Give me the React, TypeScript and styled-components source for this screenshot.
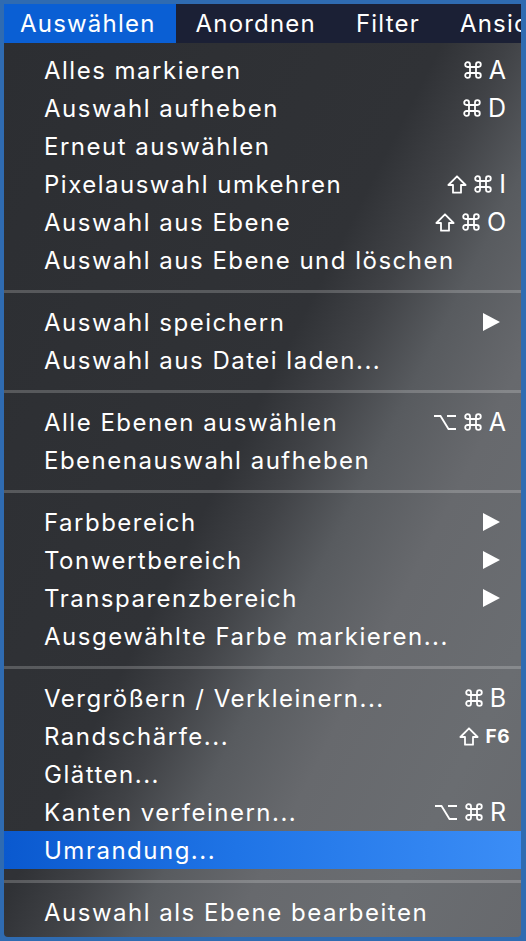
import React from 'react';
import styled, { createGlobalStyle } from 'styled-components';

const GlobalStyle = createGlobalStyle`
  html, body {
    margin: 0;
    padding: 0;
    background: #2f6bb1;
  }
  body {
    font-family: Inter, "Liberation Sans", sans-serif;
    -webkit-font-smoothing: antialiased;
  }
`;

const Frame = styled.div`
  width: 526px;
  height: 941px;
  box-sizing: border-box;
  padding: 4px 5px 4px 4px;
  background: #2f6bb1;
  display: flex;
  flex-direction: column;
  overflow: hidden;
`;

const MenuBar = styled.div`
  height: 39px;
  flex: none;
  display: flex;
  align-items: stretch;
  background: #1b2035;
  white-space: nowrap;
  overflow: hidden;
`;

const BarItem = styled.div<{ $active?: boolean; $first?: boolean }>`
  display: flex;
  align-items: center;
  padding: 0 20px 0 ${({ $first }) => ($first ? '16px' : '20px')};
  font-size: 24px;
  letter-spacing: 1.2px;
  color: #ffffff;
  background: ${({ $active }) => ($active ? '#0a5fd4' : 'transparent')};
`;

const Dropdown = styled.div`
  flex: 1;
  display: flex;
  flex-direction: column;
  padding: 8px 0 6px;
  background: linear-gradient(
    117deg,
    #2c2e32 0%,
    #303236 45%,
    #404246 52%,
    #585b5f 60%,
    #67696d 70%,
    #6a6d71 85%,
    #67696d 100%
  );
  border-radius: 0 0 4px 4px;
`;

const Row = styled.div<{ $selected?: boolean }>`
  height: 38px;
  display: flex;
  align-items: center;
  padding: 0 15px 0 40px;
  font-size: 24px;
  letter-spacing: 1.5px;
  color: #ffffff;
  background: ${({ $selected }) =>
    $selected ? 'linear-gradient(90deg, #0a59cf 0%, #1f74e6 45%, #3b8df6 100%)' : 'transparent'};
`;

const Label = styled.span`
  flex: 1;
  white-space: nowrap;
`;

const Shortcut = styled.span<{ $tight?: boolean }>`
  display: flex;
  align-items: center;
  gap: 7px;
  font-size: 25px;
  letter-spacing: 0;
  margin-right: ${({ $tight }) => ($tight ? '-4px' : '0')};
`;

const KeyIcon = styled.svg`
  display: block;
  flex: none;
  fill: none;
  stroke: #ffffff;
  stroke-width: 1.8;
  stroke-linejoin: round;
`;

const SmallKey = styled.span`
  font-size: 19px;
  font-weight: 700;
  letter-spacing: 0.5px;
`;

const Arrow = styled.span`
  width: 0;
  height: 0;
  margin-right: 6px;
  border-top: 9px solid transparent;
  border-bottom: 9px solid transparent;
  border-left: 17px solid #ffffff;
`;

const Separator = styled.div`
  height: 24px;
  display: flex;
  align-items: center;
  &::after {
    content: '';
    flex: 1;
    height: 3px;
    background: rgba(255, 255, 255, 0.2);
  }
`;

const Cmd = () => (
  <KeyIcon width="18" height="18" viewBox="0 0 18 18">
    <path d="M6 6H12V12H6Z M6 6V3.6A2.4 2.4 0 1 0 3.6 6H6 M12 6V3.6A2.4 2.4 0 1 1 14.4 6H12 M6 12V14.4A2.4 2.4 0 1 1 3.6 12H6 M12 12V14.4A2.4 2.4 0 1 0 14.4 12H12" />
  </KeyIcon>
);

const Shift = () => (
  <KeyIcon width="20" height="19" viewBox="0 0 20 19">
    <path d="M10 1.3L18.6 10H14V17.7H6V10H1.4Z" />
  </KeyIcon>
);

const Opt = () => (
  <KeyIcon width="24" height="18" viewBox="0 0 24 18" strokeWidth={2.2} style={{ strokeLinejoin: 'miter' }}>
    <path d="M1 3H7.5L15.5 16H23 M14 3H23" />
  </KeyIcon>
);

type Item = {
  label: string;
  keys?: React.ReactNode;
  tight?: boolean;
  sub?: boolean;
  selected?: boolean;
};

const groups: Item[][] = [
  [
    { label: 'Alles markieren', keys: <><Cmd />A</> },
    { label: 'Auswahl aufheben', keys: <><Cmd />D</> },
    { label: 'Erneut auswählen' },
    { label: 'Pixelauswahl umkehren', keys: <><Shift /><Cmd />I</> },
    { label: 'Auswahl aus Ebene', keys: <><Shift /><Cmd />O</> },
    { label: 'Auswahl aus Ebene und löschen' },
  ],
  [
    { label: 'Auswahl speichern', sub: true },
    { label: 'Auswahl aus Datei laden...' },
  ],
  [
    { label: 'Alle Ebenen auswählen', keys: <><Opt /><Cmd />A</> },
    { label: 'Ebenenauswahl aufheben' },
  ],
  [
    { label: 'Farbbereich', sub: true },
    { label: 'Tonwertbereich', sub: true },
    { label: 'Transparenzbereich', sub: true },
    { label: 'Ausgewählte Farbe markieren...' },
  ],
  [
    { label: 'Vergrößern / Verkleinern...', keys: <><Cmd />B</> },
    { label: 'Randschärfe...', keys: <><Shift /><SmallKey>F6</SmallKey></>, tight: true },
    { label: 'Glätten...' },
    { label: 'Kanten verfeinern...', keys: <><Opt /><Cmd />R</> },
    { label: 'Umrandung...', selected: true },
  ],
  [{ label: 'Auswahl als Ebene bearbeiten' }],
];

export default function App() {
  return (
    <Frame>
      <GlobalStyle />
      <MenuBar>
        <BarItem $active $first>Auswählen</BarItem>
        <BarItem>Anordnen</BarItem>
        <BarItem>Filter</BarItem>
        <BarItem>Ansicht</BarItem>
      </MenuBar>
      <Dropdown>
        {groups.map((group, gi) => (
          <React.Fragment key={gi}>
            {gi > 0 && <Separator />}
            {group.map((item) => (
              <Row key={item.label} $selected={item.selected}>
                <Label>{item.label}</Label>
                {item.keys && <Shortcut $tight={item.tight}>{item.keys}</Shortcut>}
                {item.sub && <Arrow />}
              </Row>
            ))}
          </React.Fragment>
        ))}
      </Dropdown>
    </Frame>
  );
}
